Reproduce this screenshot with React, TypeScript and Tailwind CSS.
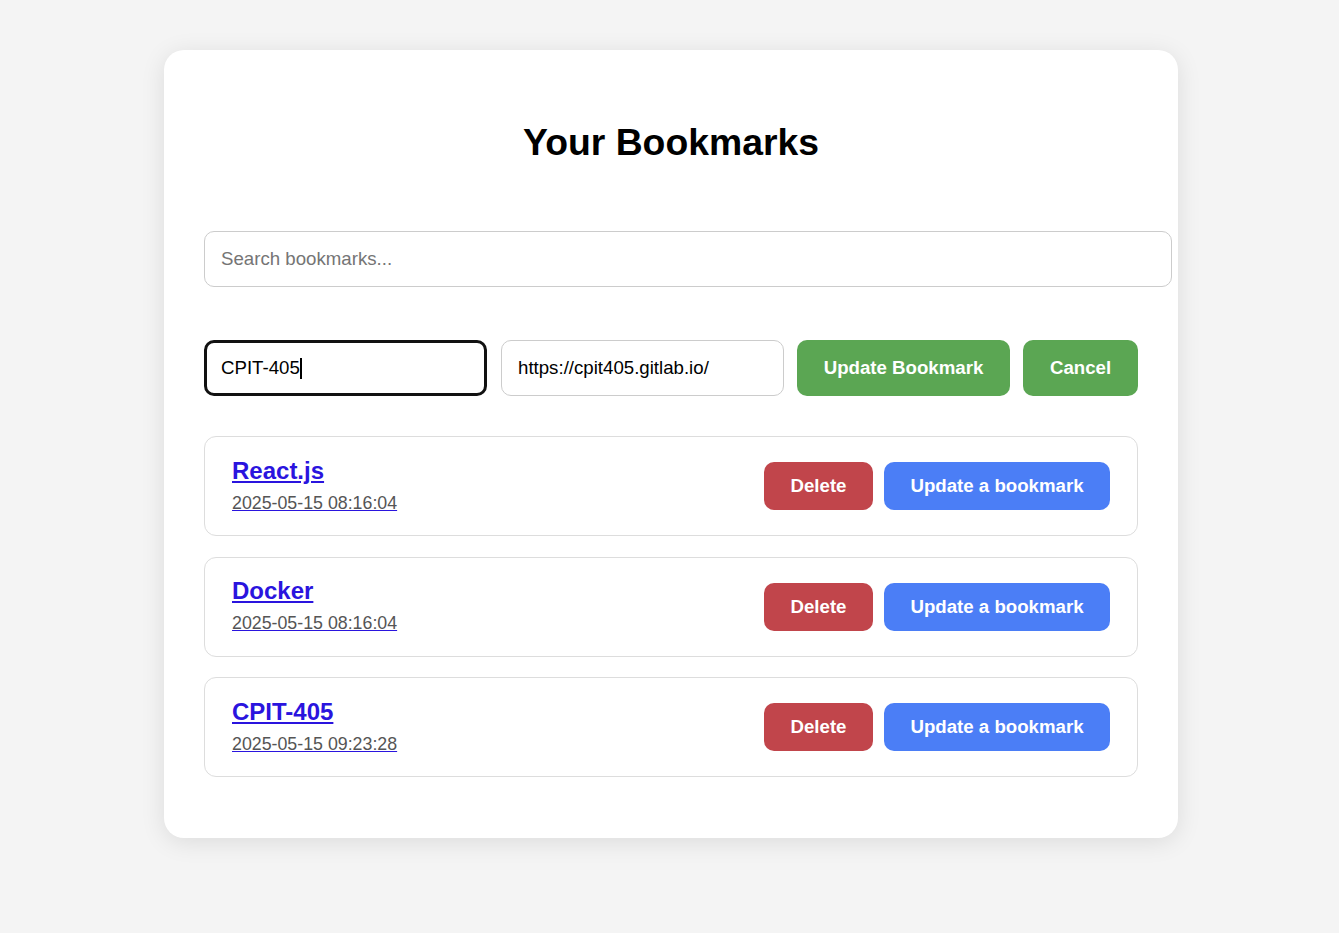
import React from "react";

const items = [
  { title: "React.js", date: "2025-05-15 08:16:04" },
  { title: "Docker", date: "2025-05-15 08:16:04" },
  { title: "CPIT-405", date: "2025-05-15 09:23:28" },
];

export default function App() {
  return (
    <div
      className="min-h-[933px] w-full bg-[#f4f4f4] pt-[50px]"
      style={{ fontFamily: '"Liberation Sans", Arial, sans-serif' }}
    >
      <div className="ml-[164px] w-[1014px] rounded-[20px] bg-white p-[40px] shadow-[0_4px_24px_rgba(0,0,0,0.1)]">
        <h1 className="mt-[32px] text-center text-[37.33px] font-bold leading-[40px] text-black">
          Your Bookmarks
        </h1>
        <input
          placeholder="Search bookmarks..."
          className="mt-[69px] block h-[56px] w-[968px] rounded-[10px] border border-[#ccc] px-[16px] text-[18.67px] text-black outline-none placeholder:text-[#757575]"
        />
        <div className="mt-[53px] flex h-[56px] items-center">
          <div className="relative">
            <input
              defaultValue="CPIT-405"
              className="h-[56px] w-[283px] rounded-[10px] border-[3px] border-[#111] px-[14px] text-[18.67px] text-black caret-transparent outline-none"
            />
            <span className="pointer-events-none absolute left-[96px] top-[18px] h-[21px] w-[1.5px] bg-black" />
          </div>
          <input
            defaultValue="https://cpit405.gitlab.io/"
            className="ml-[14px] h-[56px] w-[283px] rounded-[10px] border border-[#ccc] px-[16px] text-[18.67px] text-black outline-none"
          />
          <button className="ml-[13px] h-[56px] w-[213px] rounded-[10px] bg-[#5ba653] text-[18.67px] font-bold text-white">
            Update Bookmark
          </button>
          <button className="ml-[13px] h-[56px] w-[115px] rounded-[10px] bg-[#5ba653] text-[18.67px] font-bold text-white">
            Cancel
          </button>
        </div>
        <div className="mt-[40px] mb-[21px] flex flex-col gap-[20.5px]">
          {items.map((it) => (
            <div
              key={it.title}
              className="flex h-[100px] items-center justify-between rounded-[12px] border border-[#ddd] px-[27px]"
            >
              <a href="#" className="flex flex-col items-start pb-[2px] text-[#2a14de] underline">
                <span className="text-[24px] font-bold leading-[28px]">{it.title}</span>
                <span className="mt-[8px] text-[17.8px] leading-[21px] text-[#555]">{it.date}</span>
              </a>
              <div className="flex items-center gap-[11px]">
                <button className="h-[48px] w-[109px] rounded-[10px] bg-[#c1454b] text-[18.67px] font-bold text-white">
                  Delete
                </button>
                <button className="h-[48px] w-[226px] rounded-[10px] bg-[#4b7ef6] text-[18.67px] font-bold text-white">
                  Update a bookmark
                </button>
              </div>
            </div>
          ))}
        </div>
      </div>
    </div>
  );
}
